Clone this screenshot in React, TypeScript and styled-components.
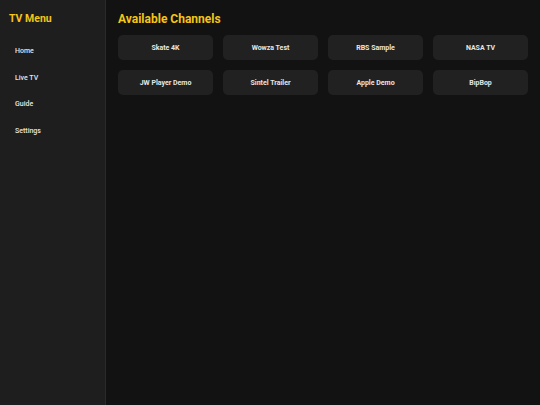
import React from 'react';
import styled, { createGlobalStyle } from 'styled-components';

const colors = {
  sidebar: '#1e1e1e',
  main: '#121212',
  border: '#2a2a2a',
  card: '#212121',
  accent: '#f5c518',
  text: '#e6e6e6',
};

const channels = [
  'Skate 4K',
  'Wowza Test',
  'RBS Sample',
  'NASA TV',
  'JW Player Demo',
  'Sintel Trailer',
  'Apple Demo',
  'BipBop',
];

const menu = ['Home', 'Live TV', 'Guide', 'Settings'];

const GlobalStyle = createGlobalStyle`
html, body {
  margin: 0;
  padding: 0;
  height: 100%;
  background: ${colors.main};
}
#root {
  height: 100%;
}
* {
  box-sizing: border-box;
}`;

const Layout = styled.div`
display: flex;
height: 405px;
font-family: Roboto, "Liberation Sans", sans-serif;`;

const Sidebar = styled.nav`
width: 106px;
flex-shrink: 0;
background-color: ${colors.sidebar};
border-right: 1px solid ${colors.border};
padding: 12px 9px;`;

const MenuTitle = styled.h2`
margin: 0;
font-size: 10.5px;
line-height: 13px;
font-weight: 700;
color: ${colors.accent};`;

const MenuList = styled.ul`
list-style: none;
margin: 13px 0 0;
padding: 0;`;

const MenuItem = styled.li`
display: flex;
align-items: center;
height: 26.6px;
padding: 0 6px;
font-size: 7px;
font-weight: 500;
color: ${colors.text};
border-radius: 4px;`;

const Main = styled.main`
flex: 1;
background-color: ${colors.main};
padding: 12px;`;

const Heading = styled.h1`
margin: 0;
font-size: 12px;
line-height: 15px;
font-weight: 700;
color: ${colors.accent};`;

const Grid = styled.div`
display: grid;
grid-template-columns: repeat(4, 1fr);
gap: 10px;
margin-top: 8px;`;

const Card = styled.button`
height: 25px;
border: none;
border-radius: 5px;
background-color: ${colors.card};
color: ${colors.text};
font-family: inherit;
font-size: 7px;
font-weight: 700;
display: flex;
align-items: center;
justify-content: center;
padding: 0;`;

const App = () => (
  <>
    <GlobalStyle />
    <Layout>
      <Sidebar>
        <MenuTitle>TV Menu</MenuTitle>
        <MenuList>
          {menu.map((item) => (
            <MenuItem key={item}>{item}</MenuItem>
          ))}
        </MenuList>
      </Sidebar>
      <Main>
        <Heading>Available Channels</Heading>
        <Grid>
          {channels.map((name) => (
            <Card key={name}>{name}</Card>
          ))}
        </Grid>
      </Main>
    </Layout>
  </>
);

export default App;
